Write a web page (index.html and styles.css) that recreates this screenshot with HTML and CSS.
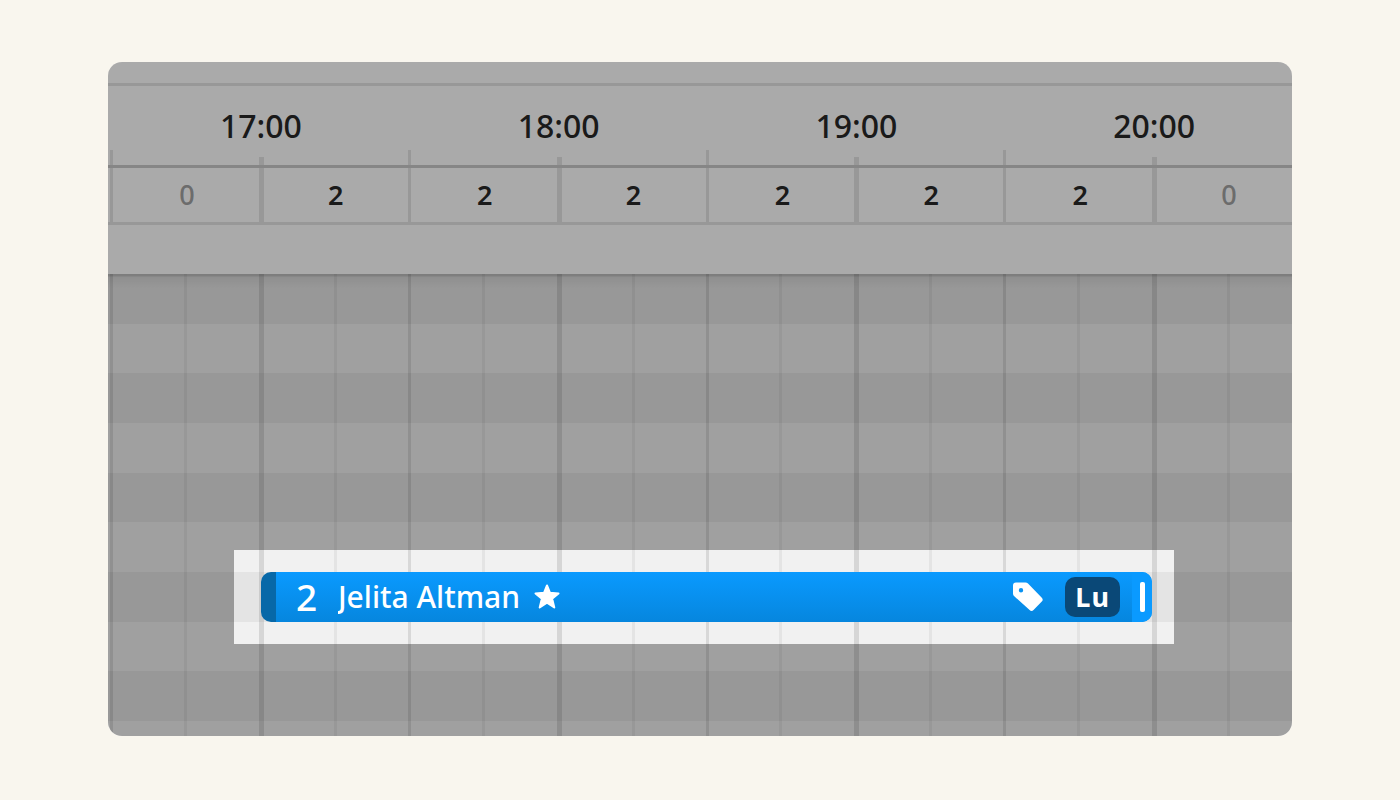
FILE: index.html
```
<!DOCTYPE html>
<html lang="en">
<head>
  <meta charset="UTF-8" />
  <meta name="viewport" content="width=device-width, initial-scale=1" />
  <title>Reservation timeline</title>
  <link rel="stylesheet" href="styles.css">
</head>
<body>

  <main class="timeline">

    <!-- HOURS + GUEST COUNTS -->
    <header class="head">
      <div class="hours">
        <div class="hour">17:00</div>
        <div class="hour">18:00</div>
        <div class="hour">19:00</div>
        <div class="hour">20:00</div>
      </div>
      <div class="counts">
        <div class="count empty">0</div>
        <div class="count full">2</div>
        <div class="count">2</div>
        <div class="count full">2</div>
        <div class="count">2</div>
        <div class="count full">2</div>
        <div class="count">2</div>
        <div class="count full empty">0</div>
      </div>
    </header>

    <!-- TABLE LANES -->
    <section class="board">
      <div class="lanes">
        <div class="lane"></div>
        <div class="lane"></div>
        <div class="lane"></div>
        <div class="lane"></div>
        <div class="lane"></div>
        <div class="lane"></div>
        <div class="lane"></div>
        <div class="lane"></div>
        <div class="lane"></div>
        <div class="lane"></div>
      </div>

      <div class="lines">
        <span class="slot"></span>
        <span class="slot full"></span>
        <span class="slot"></span>
        <span class="slot full"></span>
        <span class="slot"></span>
        <span class="slot full"></span>
        <span class="slot"></span>
        <span class="slot full"></span>
      </div>

      <div class="bookings">
        <article class="booking">
          <span class="party">2</span>
          <span class="guest">Jelita Altman</span>
          <svg class="star" viewBox="0 0 26 26" aria-hidden="true">
            <path d="M13 1.500l3 7.300 8.500.6-6.400 5.200 2.200 8.900-7.300-4.800L5.700 23.500l2.200-8.900L1.500 9.400l8.500-.6z" fill="#fff" stroke="#fff" stroke-width="2" stroke-linejoin="round"/>
          </svg>
          <svg class="tag" viewBox="0 0 30 30" aria-hidden="true">
            <path fill="#fff" fill-rule="evenodd" d="M3 .5h9.500c1 0 1.800.3 2.500 1l13.800 14.300c1.200 1.200 1.200 2.600 0 3.800l-8.300 8.500c-1.200 1.200-2.700 1.200-3.900 0L1.300 14.300C.5 13.500 0 12.600 0 11.500v-8c0-2 1-3 3-3zM8 6a2.200 2.200 0 1 0 0 4.400A2.200 2.200 0 0 0 8 6z"/>
          </svg>
          <span class="badge">Lu</span>
          <span class="handle"></span>
        </article>
      </div>
    </section>

  </main>

</body>
</html>
```
FILE: styles.css
```
/* RESET */
* {
  margin: 0;
  padding: 0;
  box-sizing: border-box;
}

body {
  display: flex;
  min-height: 100vh;
  padding: 62px 108px 64px;
  background-color: #f9f6ee;
  font-family: "Noto Sans", "Open Sans", sans-serif;
  color: #272727;
}

.timeline {
  flex: 1;
  display: flex;
  flex-direction: column;
  min-width: 0;
  border-radius: 14px;
  overflow: hidden;
  background-color: #fff;
}

/* HEADER */
.head {
  padding-top: 21px;
  padding-bottom: 49px;
}

/* The grid runs a little past the right edge, like a scrolled view */
.hours,
.counts,
.lines,
.bookings {
  display: grid;
  grid-template-columns: 4px repeat(8, 1fr);
  margin-right: -11px;
}

.hours {
  height: 82px;
  border-top: 3px solid #e5e5e5;
  align-items: center;
}
/* Each label is centered on its full hour line */
.hour {
  grid-column: span 2;
  text-align: center;
  font-size: 32px;
  line-height: 40px;
  font-weight: 500;
}
.hour:first-child {
  grid-column: 2 / span 2;
}

.counts {
  height: 60px;
  border-top: 3px solid #c9c9c9;
  border-bottom: 3px solid #e5e5e5;
}
.count {
  position: relative;
  margin-left: -2px;
  border-left: 3px solid #e5e5e5;
  text-align: center;
  font-size: 27px;
  line-height: 54px;
  font-weight: 600;
}
.count:first-child {
  grid-column-start: 2;
}
.count.full {
  margin-right: 2px;
  border-left-width: 5px;
}
.count.empty {
  color: #a2a2a2;
  font-weight: 500;
}
/* Tick above the counts row */
.count::before {
  content: "";
  position: absolute;
  left: -3px;
  top: -18px;
  width: 3px;
  height: 15px;
  background-color: #e5e5e5;
}
.count.full::before {
  left: -5px;
  top: -11px;
  width: 5px;
  height: 8px;
}

/* BOARD: lanes, lines and bookings share one cell */
.board {
  position: relative;
  z-index: 1;
  flex: 1;
  display: grid;
  grid-template-columns: minmax(0, 1fr);
}
.lanes,
.lines,
.bookings {
  grid-area: 1 / 1;
}
.lanes,
.bookings {
  display: grid;
  grid-template-rows: repeat(9, minmax(40px, 1fr)) 15px;
}
.lane {
  background-color: #f1f1f1;
}
.lane:nth-child(odd) {
  background-color: #e4e4e4;
}

.lines {
  background-image: linear-gradient(rgba(0, 0, 0, 0.18), rgba(0, 0, 0, 0.16) 2px, rgba(0, 0, 0, 0.06) 3px, transparent 14px);
}
.slot {
  display: flex;
  justify-content: flex-end;
  margin-left: -2px;
  border-left: 3px solid rgba(0, 0, 0, 0.1);
}
.slot:first-child {
  grid-column-start: 2;
}
.slot.full {
  border-left: 5px solid rgba(0, 0, 0, 0.11);
}
/* Quarter hour */
.slot::after {
  content: "";
  width: 50%;
  border-left: 3px solid rgba(0, 0, 0, 0.05);
}

/* BOOKING */
.booking {
  position: relative;
  isolation: isolate;
  grid-area: 7 / 3 / 8 / 9;
  display: flex;
  align-items: center;
  margin-right: 2px;
  padding-left: 20px;
  border-left: 15px solid #0768a8;
  border-radius: 10px;
  background: linear-gradient(#0a9aff, #0686de) padding-box;
  color: #fff;
}
/* Spotlight: everything outside of it is dimmed */
.booking::before {
  content: "";
  position: absolute;
  z-index: -1;
  inset: -22px -22px -22px -42px;
  box-shadow: 0 0 0 4000px rgba(0, 0, 0, 0.333);
}
.party {
  width: 42px;
  font-size: 37px;
  line-height: 48px;
  font-weight: 500;
}
.guest {
  overflow: hidden;
  font-size: 30px;
  line-height: 48px;
  font-weight: 500;
}
.star {
  width: 26px;
  height: 26px;
  margin-left: 14px;
}
.tag {
  width: 30px;
  height: 30px;
  margin-left: auto;
}
.badge {
  width: 55px;
  height: 40px;
  margin: 0 12px 0 22px;
  border-radius: 10px;
  background-color: #0a4877;
  text-align: center;
  font-size: 27px;
  line-height: 40px;
  font-weight: 700;
  letter-spacing: 1px;
}
.handle {
  align-self: stretch;
  display: flex;
  align-items: center;
  width: 20px;
  padding-left: 8px;
  border-radius: 0 10px 10px 0;
  background-color: #0a9aff;
}
.handle::before {
  content: "";
  width: 5px;
  height: 30px;
  border-radius: 2px;
  background-color: #fff;
}
```
